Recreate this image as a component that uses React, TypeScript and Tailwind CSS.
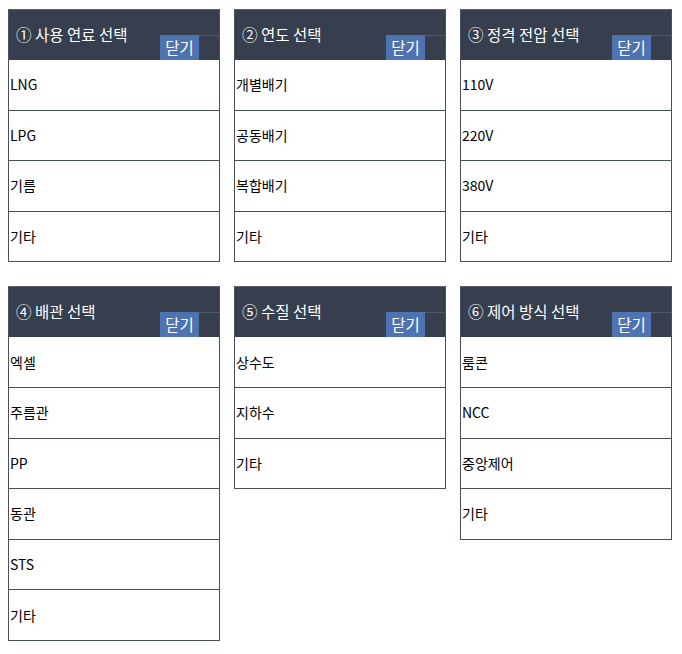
import React from 'react';

interface Panel {
  title: string;
  items: string[];
}

const panels: Panel[] = [
  { title: '① 사용 연료 선택', items: ['LNG', 'LPG', '기름', '기타'] },
  { title: '② 연도 선택', items: ['개별배기', '공동배기', '복합배기', '기타'] },
  { title: '③ 정격 전압 선택', items: ['110V', '220V', '380V', '기타'] },
  { title: '④ 배관 선택', items: ['엑셀', '주름관', 'PP', '동관', 'STS', '기타'] },
  { title: '⑤ 수질 선택', items: ['상수도', '지하수', '기타'] },
  { title: '⑥ 제어 방식 선택', items: ['룸콘', 'NCC', '중앙제어', '기타'] },
];

const SelectPanel: React.FC<Panel> = ({ title, items }) => {
  return (
    <div className="flex flex-col w-[212px] border-x border-t border-[#4a4f5c] border-t-[#5c616d]">
      {/* Header */}
      <div className="flex h-[50px] bg-[#373e4d]">
        <div className="flex-1 flex items-center pl-[7px] pb-[1px] text-white text-[15.5px]">{title}</div>
        <button className="self-end flex items-center justify-center w-[39px] h-[25px] bg-[#4f72b0] text-white text-[15.5px] leading-none">
          닫기
        </button>
        <div className="self-end w-[20px] h-[25px] border-t border-[#535a69]" />
      </div>

      {/* Options */}
      {items.map((item) => (
        <div
          key={item}
          className="flex items-center h-[50.6px] pl-[1px] border-b border-[#4a4f5c] bg-white text-[14px] text-black"
        >
          {item}
        </div>
      ))}
    </div>
  );
};

export default function App() {
  return (
    <div
      className="min-h-[654px] bg-white pt-[9px] pl-[8px]"
      style={{ fontFamily: '"Noto Sans CJK KR", "Noto Sans", sans-serif' }}
    >
      <div className="grid grid-cols-[212px_212px_212px] gap-x-[14px] gap-y-[24px] items-start">
        {panels.map((p) => (
          <SelectPanel key={p.title} {...p} />
        ))}
      </div>
    </div>
  );
}
